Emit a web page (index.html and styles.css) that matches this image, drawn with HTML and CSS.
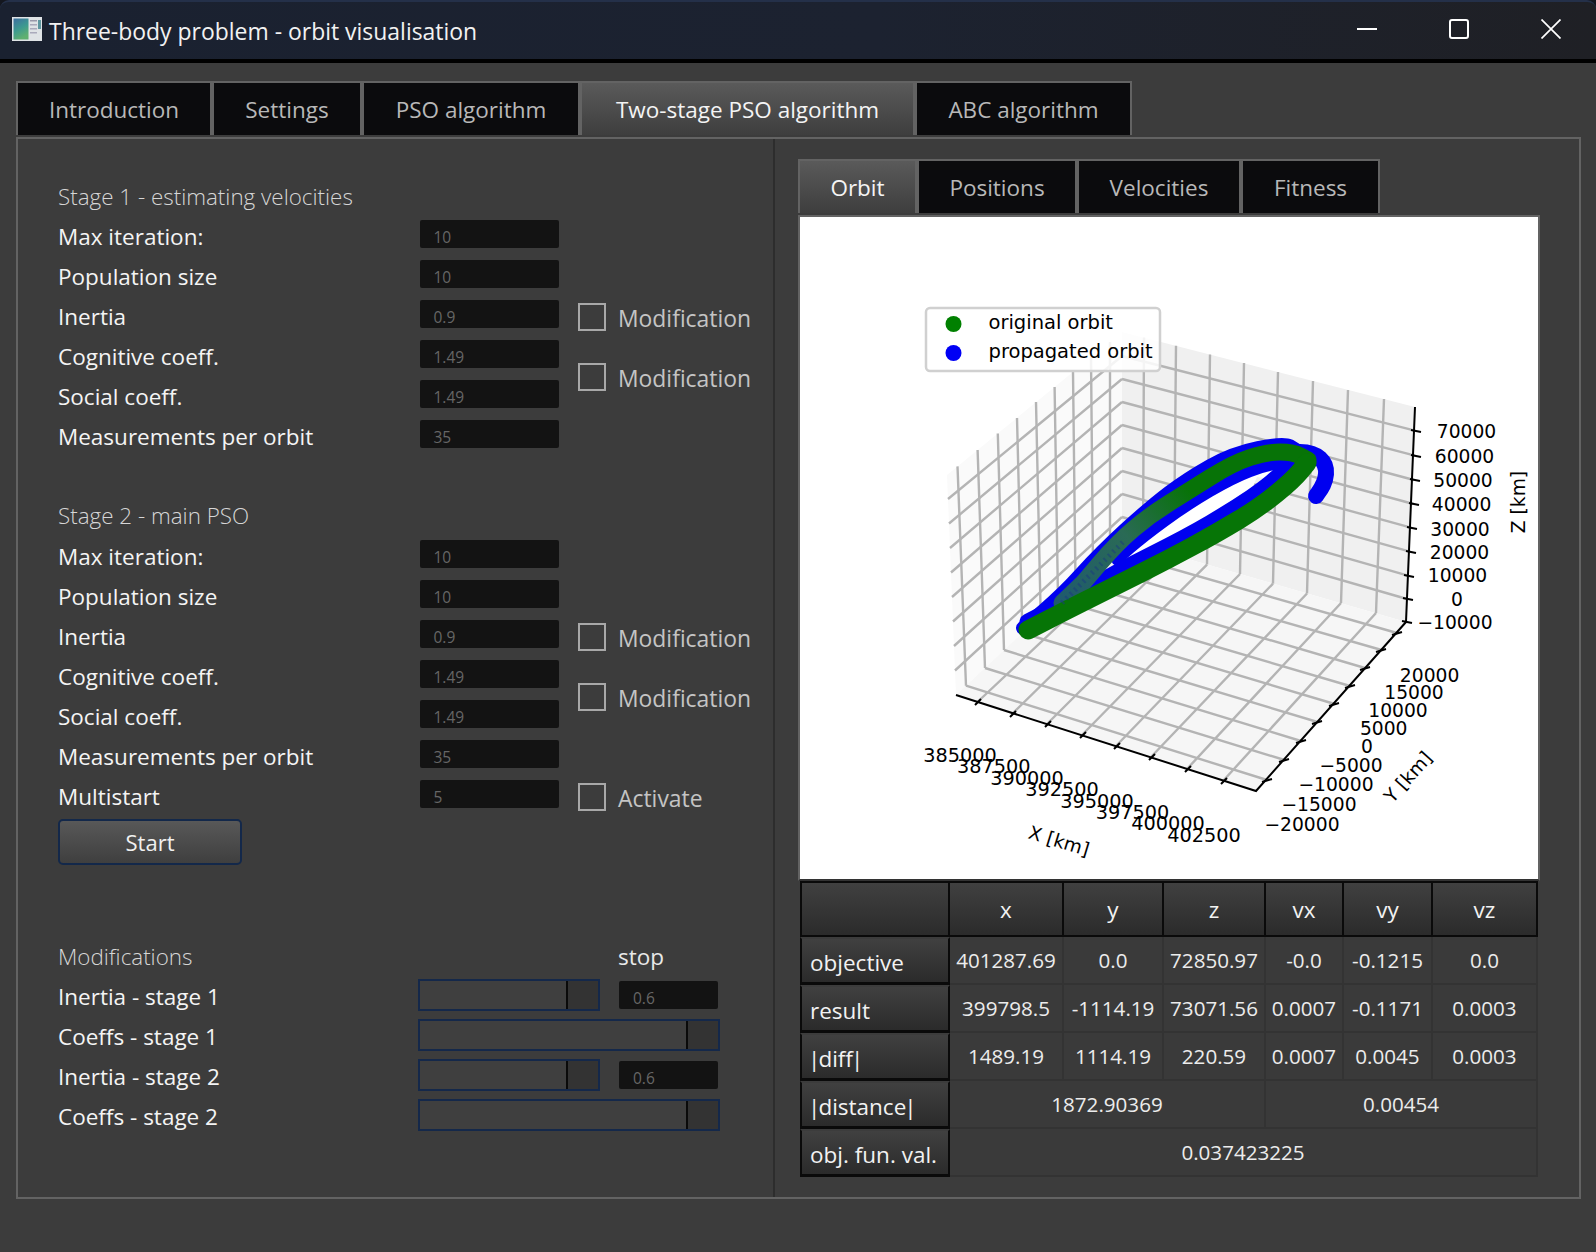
FILE: index.html
```html
<!DOCTYPE html>
<html lang="en">
<head>
<meta charset="utf-8">
<title>Three-body problem - orbit visualisation</title>
<link rel="stylesheet" href="styles.css">
</head>
<body>
<div class="window">
  <header class="titlebar">
    <svg class="app-icon" viewBox="0 0 30 24" width="30" height="24">
      <defs><linearGradient id="ig" x1="0" y1="0" x2="0.4" y2="1"><stop offset="0" stop-color="#3d6ea0"/><stop offset="0.55" stop-color="#3d9a90"/><stop offset="1" stop-color="#5fb070"/></linearGradient></defs>
      <rect width="30" height="24" fill="#dfe3e6"/>
      <rect x="1.5" y="1.5" width="15" height="21" fill="url(#ig)"/>
      <rect x="18" y="3" width="7" height="1.5" fill="#99a"/><rect x="18" y="7" width="7" height="1.5" fill="#aab"/><rect x="18" y="11" width="7" height="1.5" fill="#aab"/><rect x="18" y="15" width="7" height="1.5" fill="#aab"/><rect x="26" y="3" width="3" height="9" fill="#5f97a0"/>
    </svg>
    <span class="title">Three-body problem - orbit visualisation</span>
    <div class="controls">
      <svg viewBox="0 0 20 20" width="20" height="20"><path d="M0 10H20" stroke="#fff" stroke-width="2"/></svg>
      <svg viewBox="0 0 20 20" width="20" height="20"><rect x="1" y="1" width="18" height="18" rx="2" fill="none" stroke="#fff" stroke-width="2"/></svg>
      <svg viewBox="0 0 20 20" width="20" height="20"><path d="M0.5 0.5L19.5 19.5M19.5 0.5L0.5 19.5" stroke="#fff" stroke-width="1.7" fill="none"/></svg>
    </div>
  </header>
  <main class="content">
    <nav class="tabs top-tabs">
      <div class="tab">Introduction</div>
      <div class="tab">Settings</div>
      <div class="tab">PSO algorithm</div>
      <div class="tab active">Two-stage PSO algorithm</div>
      <div class="tab last">ABC algorithm</div>
    </nav>
    <section class="pane">
      <div class="left">
        <h2 class="heading first">Stage 1 - estimating velocities</h2>
        <div class="stage">
          <div class="fields">
            <div class="row"><label>Max iteration:</label><div class="input">10</div></div>
            <div class="row"><label>Population size</label><div class="input">10</div></div>
            <div class="row"><label>Inertia</label><div class="input">0.9</div></div>
            <div class="row"><label>Cognitive coeff.</label><div class="input">1.49</div></div>
            <div class="row"><label>Social coeff.</label><div class="input">1.49</div></div>
            <div class="row"><label>Measurements per orbit</label><div class="input">35</div></div>
          </div>
          <div class="checks">
            <div class="check"><span class="box"></span><span class="check-text">Modification</span></div>
            <div class="check"><span class="box"></span><span class="check-text">Modification</span></div>
          </div>
        </div>
        <h2 class="heading second">Stage 2 - main PSO</h2>
        <div class="stage">
          <div class="fields">
            <div class="row"><label>Max iteration:</label><div class="input">10</div></div>
            <div class="row"><label>Population size</label><div class="input">10</div></div>
            <div class="row"><label>Inertia</label><div class="input">0.9</div></div>
            <div class="row"><label>Cognitive coeff.</label><div class="input">1.49</div></div>
            <div class="row"><label>Social coeff.</label><div class="input">1.49</div></div>
            <div class="row"><label>Measurements per orbit</label><div class="input">35</div></div>
            <div class="row"><label>Multistart</label><div class="input">5</div></div>
          </div>
          <div class="checks">
            <div class="check"><span class="box"></span><span class="check-text">Modification</span></div>
            <div class="check"><span class="box"></span><span class="check-text">Modification</span></div>
            <div class="check activate"><span class="box"></span><span class="check-text">Activate</span></div>
          </div>
        </div>
        <button class="start">Start</button>
        <div class="mod-head"><h2 class="heading">Modifications</h2><span class="stop">stop</span></div>
        <div class="sliders">
          <div class="srow"><label>Inertia - stage 1</label><div class="slider short"><span class="handle"></span></div><div class="input small">0.6</div></div>
          <div class="srow"><label>Coeffs - stage 1</label><div class="slider wide"><span class="handle"></span></div></div>
          <div class="srow"><label>Inertia - stage 2</label><div class="slider short"><span class="handle"></span></div><div class="input small">0.6</div></div>
          <div class="srow"><label>Coeffs - stage 2</label><div class="slider wide"><span class="handle"></span></div></div>
        </div>
      </div>
      <div class="right">
        <nav class="tabs sub-tabs">
          <div class="tab active">Orbit</div>
          <div class="tab">Positions</div>
          <div class="tab">Velocities</div>
          <div class="tab last">Fitness</div>
        </nav>
        <div class="plot">
          <svg class="chart" viewBox="800 217 738 662" width="738" height="662">
            <defs>
              <linearGradient id="fade" gradientUnits="userSpaceOnUse" x1="1060" y1="605" x2="1190" y2="490">
                <stop offset="0" stop-color="#1f5a6e"/><stop offset="0.55" stop-color="#2a6a55"/><stop offset="1" stop-color="#077307"/>
              </linearGradient>
            </defs>
            <polygon class="wall-l" points="956,695 947,475 1122,332 1122,540"/>
            <polygon class="wall-r" points="1122,332 1415,407 1406,622 1122,540"/>
            <polygon class="floor" points="956,695 1122,540 1406,622 1256,791"/>
            <g class="grid">
              <path d="M1144 337.6L1143 546M1176 345.8L1174 555M1210 354.5L1207 564.6M1244 363L1240 574M1278 372L1273 583.6M1313 381L1307 593.5M1348 390L1341 603M1384 399L1376 613"/>
              <path d="M1122 517L1407 599M1122 494L1408 575.7M1122 471L1410 551.7M1122 448L1411 527.7M1122 425L1413.5 504M1122 402L1414 480M1122 379L1415 455.7M1122 356L1415 430.7"/>
              <path d="M955 670.5L1122 517M954 646L1122 494M953 621.5L1122 471M952 597L1122 448M951 572.5L1122 425M950 548L1122 402M949 523.5L1122 379M948 499L1122 356"/>
              <path d="M957.5 466.4L966 685.7M977.6 450L985 668M997.8 433.5L1004 650M1017 418L1022.4 633M1036 402L1040.7 616M1054.6 387L1058 600M1073 372L1075.5 583M1091 357L1093 567M1110 342L1110 551"/>
              <path d="M966 685.7L1267 780M985 668L1284.5 760M1004 650L1301 741M1022.4 633L1317.5 722M1040.7 616L1334.7 704M1058 600L1350 686M1075.5 583L1365 668M1093 567L1381.6 650M1110 551L1397 633"/>
              <path d="M977.5 702L1143 546M1012 714L1174 555M1047 724L1207 564.6M1082 735L1240 574M1116 746L1273 583.6M1151 757L1307 593.5M1187 769L1341 603M1223 781L1376 613"/>
            </g>
            <polygon class="hole" points="1113,565 1143,543 1187,510 1227,485 1260,473 1280,470 1272,479 1257,477 1253,487 1213,513 1173,537 1133,557"/>
            <g class="orbit blue">
              <path class="w13" d="M1023 628L1043 611Q1063 594 1081.5 573.5Q1100 553 1125 530Q1150 507 1168.5 493Q1187 479 1210 466Q1233 453 1258 448Q1283 443 1289.5 446L1296 450"/>
              <path class="w9" d="M1117 560L1130 548.5Q1143 537 1165 521Q1187 505 1210 491.5Q1233 478 1250 471.5Q1267 465 1280 463.5L1293 462"/>
              <path class="w15" d="M1028 622L1047.5 612Q1067 602 1092 587Q1117 572 1152 554.5Q1187 537 1210 523.5Q1233 510 1251.5 497.5Q1270 485 1281.5 473.5L1293 462"/>
              <path class="w16" d="M1300 452C1318 452 1327 462 1326 474C1325 485 1320 490 1316 496"/>
            </g>
            <g class="orbit">
              <path class="fade w14" d="M1062 603L1083 583L1100 563Q1117 543 1133.5 529Q1150 515 1168.5 503.5Q1187 492 1210 477.5Q1233 463 1250 457.5Q1267 452 1280 452Q1293 452 1300.5 456L1308 460"/>
              <path class="green w18" d="M1028 630L1047.5 620Q1067 610 1092 597.5Q1117 585 1142 572.5Q1167 560 1192 546.5Q1217 533 1238.5 520Q1260 507 1276.5 493.5Q1293 480 1300 471.5L1307 463"/>
            </g>
            <path class="grid-dash" d="M1062 603L1125 540"/>
            <g class="legend">
              <rect x="926" y="308" width="234" height="63" rx="4"/>
              <circle class="dot-g" cx="953.5" cy="324" r="8"/>
              <circle class="dot-b" cx="953.5" cy="353" r="8"/>
              <text class="start-a" x="988.5" y="322">original orbit</text>
              <text class="start-a" x="988.5" y="351.5">propagated orbit</text>
            </g>
            <g class="axes">
              <path d="M956 695L1256 791L1406 622L1415 407"/>
              <path d="M975 705L981 699M1010 717L1016 711M1045 727L1051 721M1080 738L1086 732M1114 749L1120 743M1149 760L1155 754M1185 772L1191 766M1221 784L1227 778"/>
              <path d="M1262 782L1272 779M1279 762L1289 759M1296 743L1306 740M1312 724L1322 721M1329 706L1339 703M1345 688L1355 685M1360 670L1370 667M1376 652L1386 649M1392 635L1402 632"/>
              <path d="M1411 430L1421 432M1411 455L1421 457M1410 479L1420 481M1409 503L1419 505M1407 527L1417 529M1406 551L1416 553M1404 575L1414 577M1403 598L1413 600M1402 621L1412 623"/>
            </g>
            <g class="labels">
              <text x="1466.5" y="431">70000</text><text x="1464.5" y="456">60000</text><text x="1463" y="480">50000</text><text x="1461.6" y="504">40000</text><text x="1460" y="529">30000</text><text x="1459.5" y="552">20000</text><text x="1457.5" y="575">10000</text><text x="1457" y="599">0</text><text x="1455" y="622">−10000</text>
              <text x="1429.6" y="675.7">20000</text><text x="1414" y="692">15000</text><text x="1398" y="710">10000</text><text x="1383.7" y="728">5000</text><text x="1367" y="746">0</text><text x="1351" y="765">−5000</text><text x="1336" y="784">−10000</text><text x="1319" y="804">−15000</text><text x="1302" y="824">−20000</text>
              <text class="xl" x="960" y="755.7">385000</text><text class="xl" x="993.7" y="766.7">387500</text><text class="xl" x="1027" y="778">390000</text><text class="xl" x="1062" y="789">392500</text><text class="xl" x="1097" y="801">395000</text><text class="xl" x="1132.6" y="812">397500</text><text class="xl" x="1168" y="823">400000</text><text class="xl" x="1204" y="835">402500</text>
              <text x="1518" y="502" transform="rotate(-90 1518 502)">Z [km]</text>
              <text x="1408" y="777" transform="rotate(-48 1408 777)">Y [km]</text>
              <text x="1059" y="841" transform="rotate(17 1059 841)">X [km]</text>
            </g>
          </svg>
        </div>
        <table class="results">
          <colgroup><col class="c0"><col class="c1"><col class="c2"><col class="c3"><col class="c4"><col class="c5"><col class="c6"></colgroup>
          <thead>
            <tr><th class="corner"></th><th>x</th><th>y</th><th>z</th><th>vx</th><th>vy</th><th>vz</th></tr>
          </thead>
          <tbody>
            <tr><th>objective</th><td>401287.69</td><td>0.0</td><td>72850.97</td><td>-0.0</td><td>-0.1215</td><td>0.0</td></tr>
            <tr><th>result</th><td>399798.5</td><td>-1114.19</td><td>73071.56</td><td>0.0007</td><td>-0.1171</td><td>0.0003</td></tr>
            <tr><th><span class="pipe">|</span>diff<span class="pipe">|</span></th><td>1489.19</td><td>1114.19</td><td>220.59</td><td>0.0007</td><td>0.0045</td><td>0.0003</td></tr>
            <tr><th><span class="pipe">|</span>distance<span class="pipe">|</span></th><td colspan="3">1872.90369</td><td colspan="3">0.00454</td></tr>
            <tr><th>obj. fun. val.</th><td colspan="6">0.037423225</td></tr>
          </tbody>
        </table>
      </div>
    </section>
  </main>
</div>
</body>
</html>
```
FILE: styles.css
```css
* { box-sizing: border-box; }
html, body { margin: 0; padding: 0; height: 100%; background: #14171f; }
body { font-family: "Open Sans", "Noto Sans", sans-serif; font-size: 22.5px; color: #f0f0f0; overflow: hidden; }
.window { width: 1596px; height: 1252px; display: flex; flex-direction: column; }

.titlebar { height: 63px; display: flex; align-items: center; padding: 0 35px 3px 12px; background: linear-gradient(90deg, #1a2130, #1c2230 55%, #1f2025); border-top: 2px solid #243049; border-bottom: 4px solid #000; border-radius: 9px 9px 0 0; }
.app-icon { flex: none; margin-right: 7px; }
.title { font-size: 22.95px; color: #f2f2f2; padding-top: 3px; }
.controls { margin-left: auto; display: flex; gap: 72px; }

.content { flex: 1; background: #3c3c3c; padding: 18px 15px 0 16px; }
.tabs { display: grid; height: 54px; }
.top-tabs { grid-template-columns: 196px 150px 218px 335px 217px; margin-bottom: 2px; }
.sub-tabs { grid-template-columns: 119px 160px 164px 139px; margin-bottom: 2px; }
.tab { background: #0b0b0d; color: #b8b8b8; border: 2px solid #636363; border-width: 2px 2px 0 2px; display: flex; align-items: center; justify-content: center; padding-top: 1px; }
.tab.active { background: linear-gradient(#5a5a5a, #3e3e3e); color: #f4f4f4; }

.pane { height: 1062px; border: 2px solid #636363; display: flex; }
.left { flex: none; border-right: 2px solid #2d2d2d; padding-left: 40px; width: 757px; }
.heading { margin: 0; font-size: 22.4px; font-weight: 300; color: #d6d6d6; line-height: 28px; }
.heading.first { margin: 44px 0 9px; }
.heading.second { margin: 50px 0 10px; }

.stage { display: flex; }
.fields { width: 501px; display: flex; flex-direction: column; gap: 8px; }
.row { display: flex; height: 32px; }
.row label { width: 361.5px; height: 32px; line-height: 34px; color: #f4f4f4; white-space: nowrap; }
.input { width: 139.5px; height: 28px; background: #131313; border-radius: 2px; color: #666; font-size: 15.5px; line-height: 35px; padding-left: 14px; }
.checks { display: flex; flex-direction: column; padding: 83px 0 0 19px; }
.check { display: flex; align-items: center; height: 28px; color: #c4c4c4; margin-bottom: 32px; white-space: nowrap; font-size: 22.9px; }
.check-text { padding-top: 2px; }
.check.activate { margin-top: 40px; margin-bottom: 0; }
.box { width: 28px; height: 28px; border: 2px solid #a8a8a8; margin-right: 12px; flex: none; }

.start { display: block; width: 184px; height: 46px; margin-top: 7px; background: linear-gradient(#585858, #3f3f3f); border: 2px solid #13284a; border-radius: 5px; color: #f0f0f0; font: inherit; font-size: 22px; padding: 0 0 1px; }
.mod-head { display: flex; width: 662px; margin-top: 78px; height: 28px; line-height: 28px; }
.mod-head .heading { width: 560px; flex: none; }
.mod-head .stop { color: #e8e8e8; }
.sliders { margin-top: 8px; display: flex; flex-direction: column; gap: 8px; }
.srow { display: flex; height: 32px; }
.srow label { width: 360px; height: 32px; line-height: 35px; color: #f4f4f4; white-space: nowrap; }
.slider { height: 32px; border: 2px solid #14284a; background: #3f3f3f; display: flex; justify-content: flex-end; }
.slider.short { width: 182px; }
.slider.wide { width: 302px; }
.handle { width: 32px; background: #333; border-left: 2px solid #0a0a0a; }
.input.small { width: 99px; margin: 2px 0 0 19px; }

.right { padding: 20px 0 0 23px; }
.plot { width: 742px; height: 666px; border: 2px solid #636363; border-bottom-color: #333; background: #fff; }
.chart { display: block; }
.wall-l { fill: #fafafa; }
.wall-r { fill: #f0f0f0; }
.floor { fill: #f6f6f6; }
.grid path { fill: none; stroke: #b4b4b4; stroke-width: 2.4; }
.hole { fill: #fff; }
.orbit path { fill: none; stroke-linecap: round; }
.blue path { stroke: #0000f0; }
.w15 { stroke-width: 17; }
.w13 { stroke-width: 14; }
.w9 { stroke-width: 11; }
.w16 { stroke-width: 16; }
.w14 { stroke-width: 17; }
.w18 { stroke-width: 19; }
.fade { stroke: url(#fade); }
.green { stroke: #067506; }
.grid-dash { fill: none; stroke: #1a3a80; stroke-width: 5; stroke-dasharray: 2 4; opacity: .5; }
.legend rect { fill: #fff; fill-opacity: .85; stroke: #d0d0d0; stroke-width: 2.5; }
.dot-g { fill: #008000; }
.dot-b { fill: #0000f5; }
.chart text { font-family: "DejaVu Sans", sans-serif; font-size: 18.7px; fill: #000; dominant-baseline: central; text-anchor: middle; }
.chart .legend text { font-size: 19.5px; }
.chart text.xl { font-size: 19.3px; }
.chart text.start-a { text-anchor: start; }
.axes path { fill: none; stroke: #000; stroke-width: 2; }

.results { border-collapse: separate; border-spacing: 0; table-layout: fixed; width: 738px; margin-left: 2px; font-size: 20.6px; }
.c0 { width: 150px; } .c1 { width: 114px; } .c2 { width: 100px; } .c3 { width: 102px; } .c4 { width: 78px; } .c5 { width: 89px; } .c6 { width: 105px; }
.results th { font-weight: 400; color: #f2f2f2; background: linear-gradient(#404040, #2b2b2b); border: 0 solid #0a0a0a; font-size: 22.5px; }
.results thead th { height: 56px; border-width: 2px 2px 2px 0; padding-bottom: 0; text-align: center; }
.results thead th.corner { border-left-width: 2px; }
.results tbody th { height: 48px; text-align: left; padding: 3px 0 0 8px; border-width: 0 2px 3px 2px; border-top: 2px solid #3c3c3c; white-space: nowrap; }
.results td { height: 48px; padding: 0 0 1px; text-align: center; color: #ececec; background: #3a3a3a; border-right: 2px solid #333; border-bottom: 2px solid #333; white-space: nowrap; }
.pipe { margin: 0 -2px; }
```
